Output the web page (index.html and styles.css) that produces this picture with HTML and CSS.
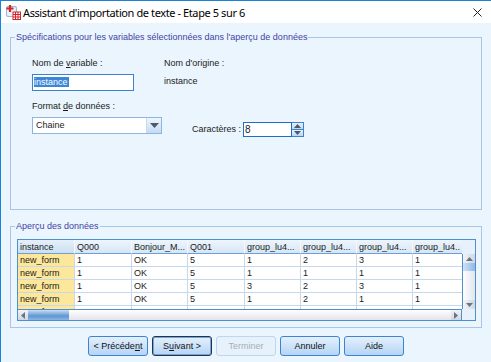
FILE: index.html
```html
<!DOCTYPE html>
<html lang="fr">
<head>
    <meta charset="UTF-8">
    <meta name="viewport" content="width=device-width, initial-scale=1.0">
    <title>Assistant d'importation de texte</title>
    <link rel="stylesheet" href="styles.css">
</head>
<body>
    <div class="window">
        <div class="titlebar">
            <svg class="app-icon" width="16" height="16" viewBox="0 0 16 16">
                <rect x="1" y="2" width="11" height="11" rx="2" fill="#9fb7cf"/>
                <rect x="2" y="3" width="9" height="9" rx="1.5" fill="#e8f0f8"/>
                <path d="M5 1v7M1.5 4.5h7" stroke="#d2232a" stroke-width="2.2"/>
                <rect x="8" y="8" width="7.5" height="7.5" fill="#fff" stroke="#d2232a" stroke-width="1"/>
                <path d="M8 10.5h7.5M8 13h7.5M10.5 8v7.5M13 8v7.5" stroke="#d2232a" stroke-width="1"/>
            </svg>
            <span class="title">Assistant d'importation de texte - Etape 5 sur 6</span>
            <svg class="close" width="9" height="9" viewBox="0 0 9 9">
                <path d="M0.5 0.5l8 8M8.5 0.5l-8 8" stroke="#222" stroke-width="1"/>
            </svg>
        </div>

        <div class="content">
            <fieldset class="group">
                <legend>Spécifications pour les variables sélectionnées dans l'aperçu de données</legend>
                <div class="spec-body">
                    <div class="name-row">
                        <div class="name-field">
                            <label>Nom de <u>v</u>ariable :</label>
                            <div class="textbox"><span class="selected">instance</span></div>
                        </div>
                        <div class="origin-field">
                            <label>Nom d'origine :</label>
                            <span class="origin-value">instance</span>
                        </div>
                    </div>
                    <label class="format-label">Format <u>d</u>e données :</label>
                    <div class="format-row">
                        <div class="combo">
                            <span class="combo-text">Chaine</span>
                            <span class="combo-btn">
                                <svg width="9" height="5" viewBox="0 0 9 5"><path d="M0 0h9L4.5 5z" fill="#4d5966"/></svg>
                            </span>
                        </div>
                        <div class="chars">
                            <label>Caractères :</label>
                            <div class="spin">
                                <span class="spin-value">8</span>
                                <span class="spin-btns">
                                    <span class="spin-up"><svg width="7" height="4" viewBox="0 0 7 4"><path d="M0 4h7L3.5 0z" fill="#4d5966"/></svg></span>
                                    <span class="spin-down"><svg width="7" height="4" viewBox="0 0 7 4"><path d="M0 0h7L3.5 4z" fill="#4d5966"/></svg></span>
                                </span>
                            </div>
                        </div>
                    </div>
                </div>
            </fieldset>

            <fieldset class="group preview">
                <legend>Aperçu des données</legend>
                <div class="preview-body">
                    <div class="grid-frame">
                        <div class="grid-main">
                            <div class="grid-view">
                                <div class="grid-row header">
                                    <span>instance</span><span>Q000</span><span>Bonjour_M...</span><span>Q001</span>
                                    <span>group_lu4...</span><span>group_lu4...</span><span>group_lu4...</span><span>group_lu4..</span>
                                </div>
                                <div class="grid-body">
                                    <div class="grid-row">
                                        <span>new_form</span><span>1</span><span>OK</span><span>5</span>
                                        <span>1</span><span>2</span><span>3</span><span>1</span>
                                    </div>
                                    <div class="grid-row">
                                        <span>new_form</span><span>1</span><span>OK</span><span>5</span>
                                        <span>1</span><span>1</span><span>1</span><span>1</span>
                                    </div>
                                    <div class="grid-row">
                                        <span>new_form</span><span>1</span><span>OK</span><span>5</span>
                                        <span>3</span><span>2</span><span>3</span><span>1</span>
                                    </div>
                                    <div class="grid-row">
                                        <span>new_form</span><span>1</span><span>OK</span><span>5</span>
                                        <span>1</span><span>2</span><span>1</span><span>1</span>
                                    </div>
                                    <div class="grid-row">
                                        <span>new_form</span><span>1</span><span>OK</span><span>5</span>
                                        <span>1</span><span>2</span><span>1</span><span>1</span>
                                    </div>
                                </div>
                            </div>
                            <div class="vscroll-col">
                                <div class="corner"></div>
                                <div class="vscroll">
                                    <span class="arrow-btn"><svg width="7" height="4" viewBox="0 0 7 4"><path d="M0 4h7L3.5 0z" fill="#6b7480"/></svg></span>
                                    <span class="vthumb"></span>
                                    <span class="vtrack"></span>
                                    <span class="arrow-btn"><svg width="7" height="4" viewBox="0 0 7 4"><path d="M0 0h7L3.5 4z" fill="#6b7480"/></svg></span>
                                </div>
                            </div>
                        </div>
                        <div class="hscroll-row">
                            <div class="hscroll">
                                <span class="arrow-btn"><svg width="4" height="7" viewBox="0 0 4 7"><path d="M4 0v7L0 3.5z" fill="#6b7480"/></svg></span>
                                <span class="hthumb"></span>
                                <span class="htrack"></span>
                                <span class="arrow-btn"><svg width="4" height="7" viewBox="0 0 4 7"><path d="M0 0v7L4 3.5z" fill="#6b7480"/></svg></span>
                            </div>
                            <div class="corner small"></div>
                        </div>
                    </div>
                </div>
            </fieldset>

            <div class="buttons">
                <button class="btn">&lt; Précéde<u>n</u>t</button>
                <button class="btn default">S<u>u</u>ivant &gt;</button>
                <button class="btn" disabled>Terminer</button>
                <button class="btn">Annuler</button>
                <button class="btn">Aide</button>
            </div>
        </div>
    </div>
</body>
</html>
```

FILE: styles.css
```css
body {
    margin: 0;
    font-family: "Liberation Sans", Arial, sans-serif;
    font-size: 9px;
    color: #1b1b1b;
}

.window {
    width: 491px;
    height: 362px;
    box-sizing: border-box;
    border-top: 1px solid #1883d7;
    border-left: 1px solid #1883d7;
    background-color: #eaf5fd;
    overflow: hidden;
}

.titlebar {
    height: 22px;
    background-color: #fff;
    display: flex;
    align-items: center;
}

.app-icon {
    margin-left: 4px;
    flex: none;
}

.title {
    margin-left: 2px;
    font-family: "Noto Sans", sans-serif;
    font-size: 11px;
    letter-spacing: -0.4px;
    color: #000;
}

.close {
    margin-left: auto;
    margin-right: 9px;
}

.content {
    padding: 0 9px;
}

/* group boxes */
.group {
    margin: 8px 0 0 0;
    padding: 0;
    border: 1px solid #a9c6e6;
    min-width: 0;
}

.group legend {
    margin-left: 4px;
    padding: 0 1px;
    line-height: 13px;
    color: #4343a6;
}

.preview {
    margin-top: 10px;
}

.spec-body {
    height: 165px;
    box-sizing: border-box;
    padding: 13px 0 0 21px;
}

label {
    display: block;
    line-height: 13px;
}

.name-row {
    display: flex;
}

.name-field {
    width: 132px;
}

.textbox {
    margin-top: 4px;
    width: 102px;
    height: 17px;
    box-sizing: border-box;
    border: 1px solid #3f82cc;
    background-color: #fff;
    padding: 1px 0 0 1px;
    line-height: 13px;
}

.selected {
    background-color: #3a86d8;
    color: #fff;
    padding-right: 1px;
}

.origin-value {
    display: block;
    margin-top: 5px;
    line-height: 13px;
}

.format-label {
    margin-top: 9px;
}

.format-row {
    display: flex;
    margin-top: 4px;
}

.combo {
    width: 130px;
    height: 17px;
    box-sizing: border-box;
    border: 1px solid #8fb4e2;
    background-color: #fff;
    display: flex;
}

.combo-text {
    flex: 1;
    padding-left: 3px;
    line-height: 15px;
}

.combo-btn {
    width: 14px;
    display: flex;
    align-items: center;
    justify-content: center;
    background: linear-gradient(#eef5fd, #c3dbf4);
    border-left: 1px solid #c5d9ef;
}

.chars {
    display: flex;
    margin: 5px 0 0 30px;
}

.chars label {
    line-height: 15px;
    margin-right: 2px;
}

.spin {
    display: flex;
    height: 15px;
}

.spin-value {
    width: 49px;
    box-sizing: border-box;
    border: 1px solid #1c6fc9;
    background-color: #fff;
    padding-left: 1px;
    line-height: 13px;
    font-size: 10px;
}

.spin-btns {
    width: 11px;
    display: flex;
    flex-direction: column;
    border: 1px solid #3f82cc;
    border-left: none;
}

.spin-btns span {
    flex: 1;
    display: flex;
    align-items: center;
    justify-content: center;
    background: linear-gradient(#e9f2fc, #bcd6f2);
}

.spin-up {
    border-bottom: 1px solid #3f82cc;
}

/* data preview grid */
.preview-body {
    height: 94px;
    box-sizing: border-box;
    padding: 6px 0 0 6px;
}

.grid-frame {
    width: 459px;
    box-sizing: border-box;
    border: 1px solid #4f8fcc;
    background-color: #e6f1fb;
}

.grid-main {
    display: flex;
}

.grid-view {
    width: 444px;
    overflow: hidden;
}

.grid-body {
    height: 55px;
    overflow: hidden;
    background-color: #fff;
}

.grid-row {
    display: grid;
    grid-template-columns: 57px 57px 56px 57px 56px 56px 56px 56px;
    width: 451px;
}

.grid-row span {
    height: 12px;
    line-height: 12px;
    padding-left: 2px;
    border-right: 1px solid #c5d8ec;
    border-bottom: 1px solid #c5d8ec;
    white-space: nowrap;
    overflow: hidden;
    background-color: #fff;
}

.grid-row span:first-child {
    background-color: #fde79a;
}

.grid-row.header span {
    height: 13px;
    line-height: 14px;
    background: linear-gradient(#eef5fc, #d6e6f6);
    border-right-color: #f4f8fd;
    border-bottom-color: #6f9fd3;
}

.grid-row.header span:first-child {
    background: linear-gradient(#e6f0fa, #cbdff3);
}

.vscroll-col {
    width: 13px;
    display: flex;
    flex-direction: column;
}

.corner {
    height: 14px;
}

.vscroll {
    height: 55px;
    display: flex;
    flex-direction: column;
    box-sizing: border-box;
    border-left: 1px solid #4f8fcc;
    background-color: #fff;
}

.arrow-btn {
    display: flex;
    align-items: center;
    justify-content: center;
    background: linear-gradient(90deg, #f1f4f8, #cfd7e2);
}

.vscroll .arrow-btn {
    height: 9px;
}

.vthumb {
    height: 8px;
    background: linear-gradient(90deg, #cfe2f7, #8eb9e8);
}

.vtrack {
    flex: 1;
    background: linear-gradient(90deg, #fdfdfe, #e2e6ec);
}

.hscroll-row {
    display: flex;
}

.hscroll {
    width: 444px;
    height: 11px;
    display: flex;
    box-sizing: border-box;
    border-top: 1px solid #4f8fcc;
    border-right: 1px solid #4f8fcc;
    background-color: #fff;
}

.hscroll .arrow-btn {
    width: 10px;
    background: linear-gradient(#f1f4f8, #cfd7e2);
}

.hthumb {
    width: 41px;
    background: linear-gradient(#c7def6, #5f96d3 60%, #8db6e4);
}

.htrack {
    flex: 1;
    background: linear-gradient(#ffffff, #e4e3ea);
}

.corner.small {
    height: 11px;
    flex: 1;
}

/* bottom buttons */
.buttons {
    display: flex;
    justify-content: center;
    gap: 4px;
    margin-top: 8px;
}

.btn {
    width: 60px;
    height: 20px;
    padding: 0;
    border: 1px solid #3e83d2;
    border-radius: 3px;
    background: linear-gradient(#e4f0fc, #b5d4f5);
    font-family: "Liberation Sans", Arial, sans-serif;
    font-size: 9px;
    color: #111;
}

.btn.default {
    border-color: #2a3344;
    box-shadow: inset 0 0 0 1px #6fa5e0;
}

.btn:disabled {
    border-color: #bfd6ee;
    background: #e7f1fb;
    color: #a3afbc;
}
```
